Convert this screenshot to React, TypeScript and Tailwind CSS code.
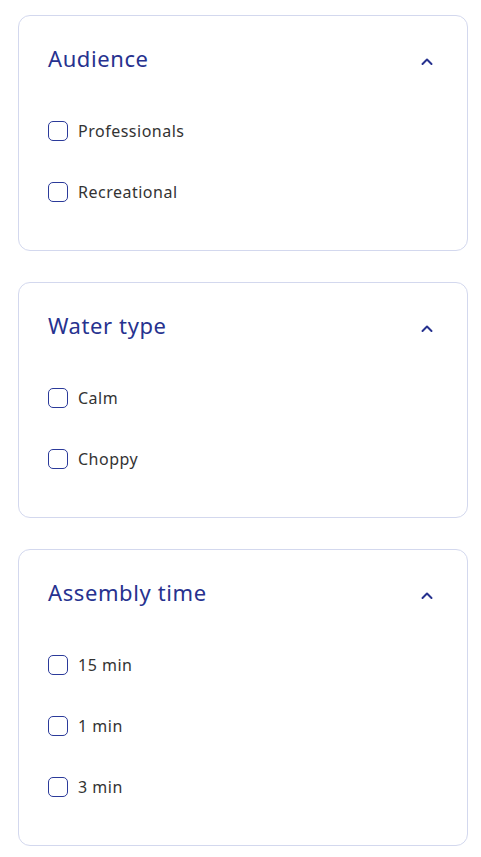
const groups = [
  { title: "Audience", options: ["Professionals", "Recreational"] },
  { title: "Water type", options: ["Calm", "Choppy"] },
  { title: "Assembly time", options: ["15 min", "1 min", "3 min"] },
];

const Chevron = () => (
  <svg width="14" height="14" viewBox="0 0 14 14" fill="none" className="text-[#27328f]">
    <path d="M2.5 9L7 4.5L11.5 9" stroke="currentColor" strokeWidth="2" strokeLinecap="round" strokeLinejoin="round" />
  </svg>
);

const FilterGroup = ({ title, options }: { title: string; options: string[] }) => {
  return (
    <div className="border border-[#d3d8ee] rounded-[12px] bg-white pt-[28px] pb-[48px] px-[29px]">
      <div className="flex items-center justify-between h-[28px]">
        <h3 className="text-[22px] leading-[28px] font-normal tracking-[0.6px] text-[#27328f]">{title}</h3>
        <span className="mr-[4px] mt-[8px]">
          <Chevron />
        </span>
      </div>
      <div className="flex flex-col gap-[41px] mt-[49px]">
        {options.map((o) => (
          <label key={o} className="flex items-center gap-[10px] h-[20px] cursor-pointer">
            <span className="w-[20px] h-[20px] rounded-[5px] border-[1.5px] border-[#2b3a9a] bg-white shrink-0" />
            <span className="text-[16px] leading-[20px] tracking-[0.5px] text-[#333333]">{o}</span>
          </label>
        ))}
      </div>
    </div>
  );
};

export default function App() {
  return (
    <div className="bg-white min-h-screen pt-[15px] pl-[18px] w-[481px]" style={{ fontFamily: '"Noto Sans", sans-serif' }}>
      <div className="w-[450px] flex flex-col gap-[31px]">
        {groups.map((g) => (
          <FilterGroup key={g.title} title={g.title} options={g.options} />
        ))}
      </div>
    </div>
  );
}
